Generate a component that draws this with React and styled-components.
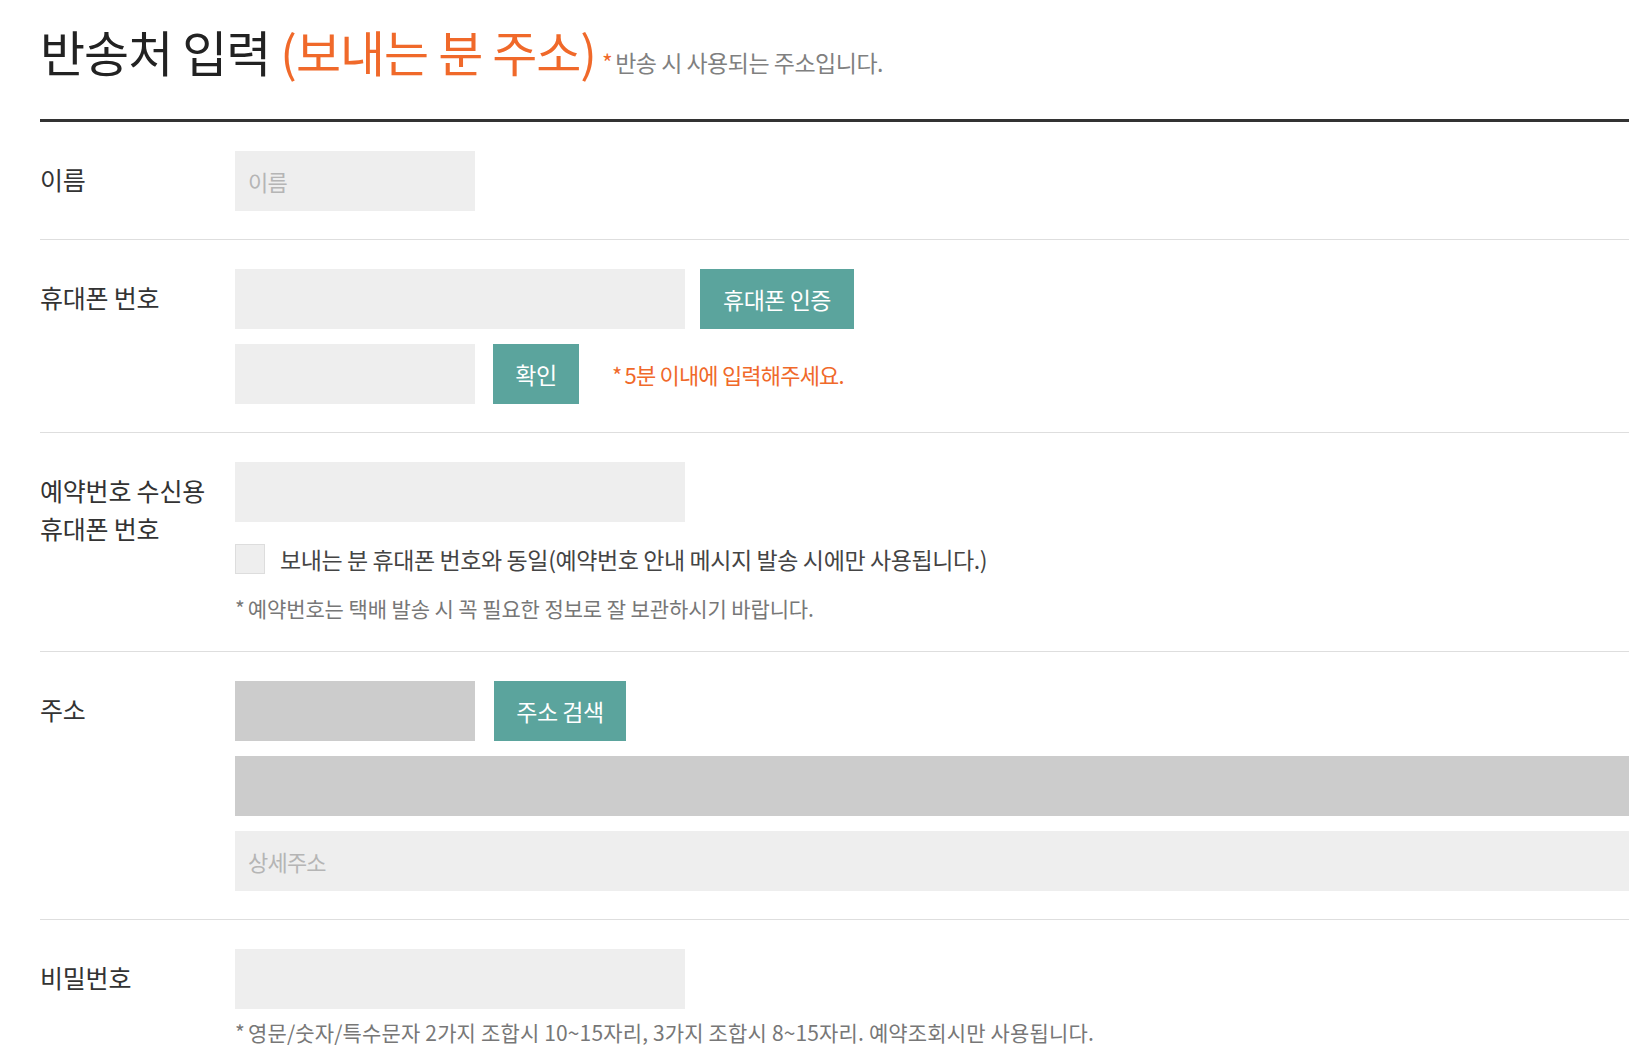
import React from "react";
import styled, { createGlobalStyle } from "styled-components";

const GlobalStyle = createGlobalStyle`
  body {
    margin: 0;
    background: #fff;
    font-family: "Noto Sans CJK KR", "Noto Sans", sans-serif;
    color: #333;
  }
`;

const Page = styled.div`
  width: 1589px;
  padding: 0 23px 0 40px;
`;

const Header = styled.div`
  display: flex;
  align-items: baseline;
  padding: 22px 0 39px;
  border-bottom: 3px solid #333;
`;

const Title = styled.h2`
  margin: 0;
  font-size: 49px;
  line-height: 58px;
  font-weight: 400;
  letter-spacing: -1px;
  color: #222;
  em {
    font-style: normal;
    color: #f0692a;
  }
`;

const TitleNote = styled.span`
  margin-left: 6px;
  font-size: 23px;
  letter-spacing: -0.5px;
  color: #808080;
`;

const Star = styled.span`
  color: ${(p) => p.color || "inherit"};
  margin-right: 3px;
`;

const Row = styled.div`
  display: grid;
  grid-template-columns: 195px 1fr;
  padding: 29px 0 ${(p) => (p.last ? 0 : 28)}px;
  border-bottom: ${(p) => (p.last ? "none" : "1px solid #dedede")};
`;

const Label = styled.div`
  padding-top: 9px;
  font-size: 25px;
  line-height: 38px;
  letter-spacing: -0.2px;
  color: #333;
`;

const Fields = styled.div`
  display: flex;
  flex-direction: column;
  gap: 15px;
`;

const Line = styled.div`
  display: flex;
  align-items: center;
  gap: ${(p) => p.gap || 18}px;
`;

const Field = styled.input`
  box-sizing: border-box;
  width: ${(p) => (p.w ? `${p.w}px` : "100%")};
  height: 60px;
  padding: 0 13px;
  border: none;
  outline: none;
  background: ${(p) => (p.locked ? "#cccccc" : "#eeeeee")};
  font-family: inherit;
  font-size: 22px;
  letter-spacing: -0.8px;
  color: #333;
  &::placeholder {
    color: #b5b5b5;
  }
`;

const Button = styled.button`
  width: ${(p) => p.w}px;
  height: 60px;
  padding: 0;
  border: none;
  background: #5ba49d;
  color: #fff;
  font-family: inherit;
  font-size: 23px;
  letter-spacing: -0.5px;
`;

const Alert = styled.span`
  margin-left: 15px;
  font-size: 22px;
  letter-spacing: -0.8px;
  color: #f0692a;
`;

const CheckLine = styled.label`
  display: flex;
  align-items: center;
  gap: 15px;
  margin-top: 7px;
  font-size: 23px;
  line-height: 30px;
  letter-spacing: -0.4px;
  color: #444;
`;

const Box = styled.span`
  flex: none;
  box-sizing: border-box;
  width: 30px;
  height: 30px;
  background: #eee;
  border: 1px solid #ddd;
`;

const Help = styled.p`
  margin: ${(p) => p.top || 0}px 0 0;
  font-size: 21px;
  line-height: 30px;
  letter-spacing: ${(p) => p.spacing ?? -0.1}px;
  color: #777;
`;

export default function App() {
  return (
    <Page>
      <GlobalStyle />
      <Header>
        <Title>
          반송처 입력 <em>(보내는 분 주소)</em>
        </Title>
        <TitleNote>
          <Star color="#f0692a">*</Star>반송 시 사용되는 주소입니다.
        </TitleNote>
      </Header>

      <Row>
        <Label>이름</Label>
        <Fields>
          <Field w={240} placeholder="이름" />
        </Fields>
      </Row>

      <Row>
        <Label>휴대폰 번호</Label>
        <Fields>
          <Line gap={15}>
            <Field w={450} />
            <Button w={154}>휴대폰 인증</Button>
          </Line>
          <Line>
            <Field w={240} />
            <Button w={86}>확인</Button>
            <Alert>
              <Star>*</Star>5분 이내에 입력해주세요.
            </Alert>
          </Line>
        </Fields>
      </Row>

      <Row>
        <Label>
          예약번호 수신용
          <br />
          휴대폰 번호
        </Label>
        <Fields>
          <Field w={450} />
          <CheckLine>
            <Box />
            보내는 분 휴대폰 번호와 동일(예약번호 안내 메시지 발송 시에만 사용됩니다.)
          </CheckLine>
          <Help top={4}>
            <Star>*</Star>예약번호는 택배 발송 시 꼭 필요한 정보로 잘 보관하시기 바랍니다.
          </Help>
        </Fields>
      </Row>

      <Row>
        <Label>주소</Label>
        <Fields>
          <Line gap={19}>
            <Field w={240} locked />
            <Button w={132}>주소 검색</Button>
          </Line>
          <Field locked />
          <Field placeholder="상세주소" />
        </Fields>
      </Row>

      <Row last>
        <Label>비밀번호</Label>
        <Fields>
          <Field w={450} type="password" />
          <Help top={-7} spacing={0.15}>
            <Star>*</Star>영문/숫자/특수문자 2가지 조합시 10~15자리, 3가지 조합시 8~15자리. 예약조회시만 사용됩니다.
          </Help>
        </Fields>
      </Row>
    </Page>
  );
}
